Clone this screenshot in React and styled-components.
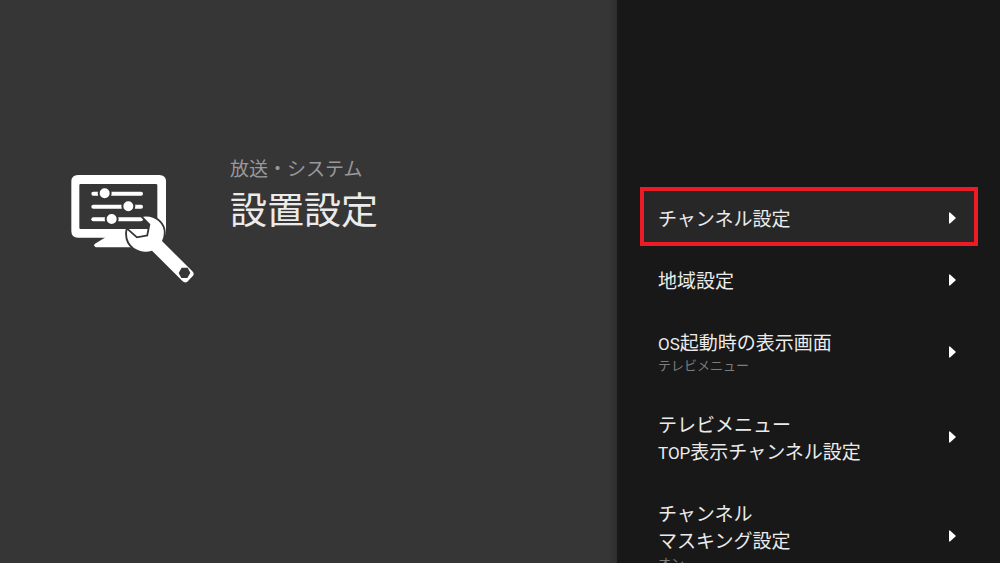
import React, { useState } from "react";
import styled, { createGlobalStyle } from "styled-components";

// Palette
const colors = {
  pane: "#363636",
  menu: "#181818",
  selected: "#272727",
  frame: "#ed1c24",
  white: "#ffffff",
  text: "#ebebeb",
  muted: "#999999",
  hint: "#7d7d7d",
};

const items = [
  { id: "channel", lines: [{ text: "チャンネル設定" }] },
  { id: "region", lines: [{ text: "地域設定" }] },
  {
    id: "startup",
    lines: [{ latin: "OS", text: "起動時の表示画面" }],
    value: "テレビメニュー",
  },
  {
    id: "top",
    lines: [{ text: "テレビメニュー" }, { latin: "TOP", text: "表示チャンネル設定" }],
  },
  {
    id: "masking",
    lines: [{ text: "チャンネル" }, { text: "マスキング設定" }],
    value: "オン",
  },
];

const GlobalStyle = createGlobalStyle`
  * {
    box-sizing: border-box;
    margin: 0;
    padding: 0;
  }

  body {
    background: ${colors.menu};
    font-family: "Noto Sans CJK JP", sans-serif;
    overflow: hidden;
  }
`;

const Screen = styled.div`
  display: grid;
  grid-template-columns: 617fr 383fr;
  height: 100vh;
  overflow: hidden;
`;

const InfoPane = styled.header`
  display: flex;
  align-items: flex-start;
  gap: 35px;
  padding: 154px 24px 0 70px;
  background: linear-gradient(to left, #2e2e2e, ${colors.pane} 9px);
`;

const IconBox = styled.div`
  flex: none;
  padding-top: 21px;

  svg {
    display: block;
    width: 125px;
    height: 108px;
  }
`;

const Category = styled.p`
  color: ${colors.muted};
  font-size: 19px;
  line-height: 28px;
`;

const Title = styled.h1`
  color: ${colors.text};
  font-size: 37px;
  font-weight: 400;
  line-height: 52px;
`;

const MenuPane = styled.nav`
  padding: 187px 22px 0 23px;
  background: ${colors.menu};
  overflow: hidden;
`;

const MenuList = styled.ul`
  list-style: none;
`;

const MenuButton = styled.button`
  display: flex;
  align-items: center;
  justify-content: space-between;
  width: 100%;
  margin-bottom: ${(props) => (props.$selected ? "3px" : "0")};
  padding: ${(props) => (props.$selected ? "13px 18px 11px 14px" : "17px 22px 18px 18px")};
  border: ${(props) => (props.$selected ? `4px solid ${colors.frame}` : "none")};
  background: ${(props) => (props.$selected ? colors.selected : "transparent")};
  color: ${colors.text};
  font-family: inherit;
  text-align: left;
  cursor: pointer;
  outline: none;

  svg {
    flex: none;
    width: 7px;
    height: 12px;
  }
`;

const Label = styled.span`
  display: block;
  font-size: 19px;
  line-height: 27px;
`;

// Narrow letters beside the kanji
const Latin = styled.span`
  font-family: Roboto, sans-serif;
  font-size: 17px;
  line-height: 1;
`;

const Value = styled.span`
  display: block;
  color: ${colors.hint};
  font-size: 13px;
  line-height: 20px;
`;

const Arrow = () => (
  <svg viewBox="0 0 7 12" aria-hidden="true">
    <path d="M0 0.5 L1 0.5 L7 6 L1 11.5 L0 11.5 Z" fill={colors.white} />
  </svg>
);

// Monitor with sliders, wrench in front
const SetupIcon = () => (
  <svg viewBox="30 30 375 324" aria-hidden="true">
    <path
      fill={colors.white}
      fillRule="evenodd"
      d="M54 30 H298 Q318 30 318 50 V198 Q318 218 298 218 H54 Q34 218 34 198 V50 Q34 30 54 30 Z
         M62 57 Q58 57 58 61 V188 Q58 192 62 192 H288 Q292 192 292 188 V61 Q292 57 288 57 Z"
    />
    <path d="M138 216 H240 V247 H108 Q99 243 104 237 Z" fill={colors.white} />
    <g stroke={colors.white} strokeWidth="12" strokeLinecap="round">
      <path d="M100 86 H243" />
      <path d="M100 125 H243" />
      <path d="M100 163 H243" />
    </g>
    <g fill={colors.white} stroke={colors.pane} strokeWidth="6">
      <circle cx="134" cy="85" r="18" />
      <circle cx="205" cy="124" r="18" />
      <circle cx="155" cy="162" r="18" />
    </g>
    <path
      d="M249 155 Q276 151 296 169 Q321 193 306 228 L397 319 Q404 326 399 332 L382 350 Q375 355 368 349 L276 257 Q248 266 222 249 Q196 229 202 195 L230 220 L264 214 L271 178 Z"
      fill={colors.white}
      stroke={colors.pane}
      strokeWidth="11"
      strokeLinejoin="round"
      paintOrder="stroke"
    />
    <path d="M365 308 L383 308 L391 323 L382 339 L364 339 L356 324 Z" fill={colors.pane} />
  </svg>
);

const App = () => {
  const [selected, setSelected] = useState("channel");

  return (
    <>
      <GlobalStyle />
      <Screen>
        <InfoPane>
          <IconBox>
            <SetupIcon />
          </IconBox>
          <div>
            <Category>放送・システム</Category>
            <Title>設置設定</Title>
          </div>
        </InfoPane>
        <MenuPane>
          <MenuList>
            {items.map((item) => (
              <li key={item.id}>
                <MenuButton
                  type="button"
                  $selected={selected === item.id}
                  onClick={() => setSelected(item.id)}
                >
                  <span>
                    {item.lines.map((line) => (
                      <Label key={line.text}>
                        {line.latin && <Latin>{line.latin}</Latin>}
                        {line.text}
                      </Label>
                    ))}
                    {item.value && <Value>{item.value}</Value>}
                  </span>
                  <Arrow />
                </MenuButton>
              </li>
            ))}
          </MenuList>
        </MenuPane>
      </Screen>
    </>
  );
};

export default App;
